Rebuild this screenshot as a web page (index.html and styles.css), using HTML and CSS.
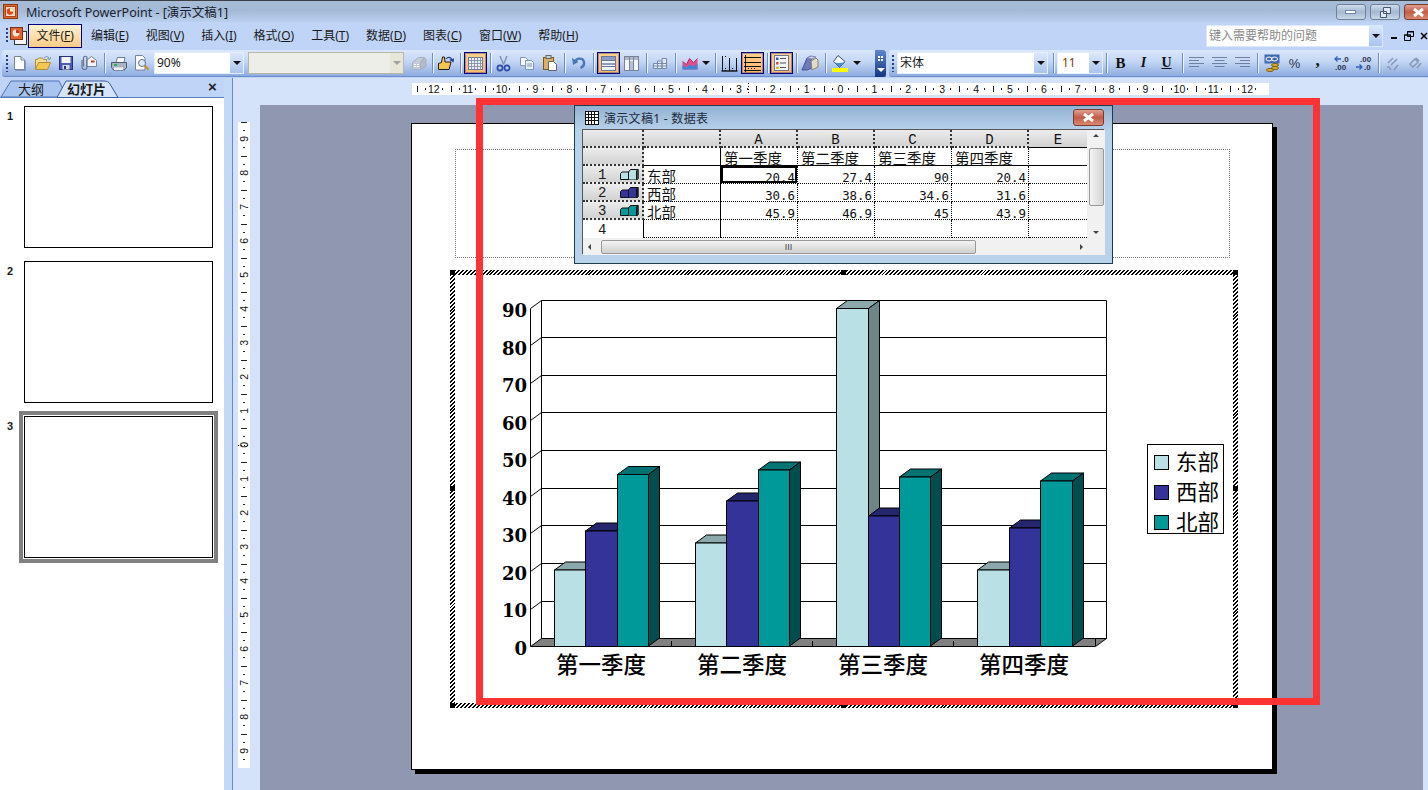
FILE: index.html
```html
<!DOCTYPE html>
<html lang="zh-CN">
<head>
<meta charset="utf-8">
<title>Microsoft PowerPoint - [演示文稿1]</title>
<link rel="stylesheet" href="styles.css">
</head>
<body>
<div class="app">
  <header class="titlebar">
    <svg class="app-icon" width="15" height="15" viewBox="0 0 15 15"><rect x=".5" y=".5" width="14" height="14" fill="#e8672a" stroke="#8c3a12"/><rect x="2.5" y="2.5" width="10" height="10" fill="#f7d9c4" stroke="#a8481c"/><circle cx="7" cy="7.5" r="3.2" fill="#d9481c"/><path d="M7 7.5V4.3a3.2 3.2 0 0 1 3.2 3.2z" fill="#fff3d0"/></svg>
    <span class="app-title">Microsoft PowerPoint - [演示文稿1]</span>
    <div class="winbtns">
      <span class="winbtn"><svg width="12" height="8" viewBox="0 0 12 8"><rect x=".5" y="2.5" width="10" height="3" fill="#fff" stroke="#6f88a8"/></svg></span>
      <span class="winbtn"><svg width="13" height="11" viewBox="0 0 13 11"><path d="M4.5.5h7v6h-7zM1.5 4.5h6v6h-6z" fill="#dfe8f4" stroke="#44586f"/></svg></span>
      <span class="winbtn close"><svg width="13" height="9" viewBox="0 0 13 9"><path d="M2 1l9 7M11 1L2 8" stroke="#fff" stroke-width="3"/></svg></span>
    </div>
  </header>

  <nav class="menubar">
    <span class="grip"></span>
    <svg class="doc-icon" width="18" height="20" viewBox="0 0 18 20"><rect x="4.5" y="5.5" width="12" height="13" fill="#f3f3f3" stroke="#333"/><rect x=".5" y="1.5" width="12" height="12" fill="#e2622e" stroke="#7a3214"/><circle cx="6" cy="7" r="3.4" fill="#ffe6d0"/><path d="M6 7V3.6A3.4 3.4 0 0 1 9.4 7z" fill="#c4391c"/></svg>
    <a class="menu-item active">文件(<u>F</u>)</a>
    <a class="menu-item">编辑(<u>E</u>)</a>
    <a class="menu-item">视图(<u>V</u>)</a>
    <a class="menu-item">插入(<u>I</u>)</a>
    <a class="menu-item">格式(<u>O</u>)</a>
    <a class="menu-item">工具(<u>T</u>)</a>
    <a class="menu-item">数据(<u>D</u>)</a>
    <a class="menu-item">图表(<u>C</u>)</a>
    <a class="menu-item">窗口(<u>W</u>)</a>
    <a class="menu-item">帮助(<u>H</u>)</a>
    <div class="helpbox"><span class="help-text">键入需要帮助的问题</span><span class="help-drop"><i class="caret"></i></span></div>
    <div class="mdi">
      <svg width="8" height="8" viewBox="0 0 8 8"><rect x="1" y="5" width="6" height="2" fill="#000"/></svg>
      <svg width="10" height="10" viewBox="0 0 10 10"><path d="M3.5 .5h6v5h-6zM.5 4h6v5.500h-6z" fill="#bfd4f6" stroke="#000"/><path d="M3 1h7M0 4h7" stroke="#000"/></svg>
      <svg width="8" height="8" viewBox="0 0 8 8"><path d="M1 1l6 6M7 1L1 7" stroke="#000" stroke-width="1.500"/></svg>
    </div>
  </nav>

  <div class="toolbars">
    <div class="toolbar tb-main">
      <span class="grip"></span>
      <span class="btn"><svg width="13" height="16" viewBox="0 0 13 16"><path d="M1.500 1.500h6.500l3.500 3.500v9.500h-10z" fill="#fff" stroke="#7b869b"/><path d="M8 1.500v3.500h3.500" fill="#d5ddec" stroke="#7b869b"/><path d="M12.500 5.500v10h-10" fill="none" stroke="#5f79a8" opacity=".6"/></svg></span>
      <span class="btn"><svg width="18" height="16" viewBox="0 0 18 16"><path d="M1.500 14.500v-10h2l1-1.500h4l1 1.500h3v2" fill="#f7df96" stroke="#b08d3a"/><path d="M1.500 14.500l3-7h12l-3 7z" fill="#f6c650" stroke="#b08d3a"/><path d="M10 3c1.500-2 3.500-2 5 0l-1.500.5 2.500 1 .5-2.500" fill="none" stroke="#7f93b5"/></svg></span>
      <span class="btn"><svg width="14" height="14" viewBox="0 0 14 14"><rect x=".5" y=".5" width="13" height="13" fill="#4b5cb5" stroke="#27316f"/><rect x="2.500" y="1" width="9" height="6" fill="#f4f6fb"/><rect x="3.500" y="9" width="7" height="4.500" fill="#d4d9ec"/><rect x="5" y="10" width="2" height="3" fill="#27316f"/></svg></span>
      <span class="btn"><svg width="17" height="16" viewBox="0 0 17 16"><path d="M6.500 5.500l5-4 5 4v6h-10z" fill="#f2f4f8" stroke="#76839b"/><path d="M11 6.500h3.500" stroke="#c4391c" stroke-width="2"/><path d="M2 5v7a2.500 2.500 0 0 0 5 0V3a1.700 1.700 0 0 0-3.500 0v8.500" fill="none" stroke="#66748f" stroke-width="1.200"/></svg></span>
      <span class="sep w7"></span>
      <span class="btn"><svg width="16" height="15" viewBox="0 0 16 15"><path d="M5 6.500l1.500-5h7.500l-1 5" fill="#f6f7fa" stroke="#6d7a90"/><path d="M.5 6.500h15v5l-2 2.500h-11l-2-2.500z" fill="#aab3c2" stroke="#4f5b6f"/><rect x="3" y="11.500" width="9" height="2.500" fill="#eef0f4"/><rect x="3" y="8" width="3" height="2" fill="#2fb04a"/></svg></span>
      <span class="btn"><svg width="16" height="16" viewBox="0 0 16 16"><path d="M1.500 .5h7l2.500 2.500v12h-9.500z" fill="#fff" stroke="#76839b"/><circle cx="8" cy="8" r="3.500" fill="#dbeafa" stroke="#66748f"/><path d="M10.500 10.500l4 4" stroke="#c98a28" stroke-width="2"/></svg></span>
      <div class="combo zoom-combo"><span class="combo-text">90%</span><span class="drop"><i class="caret"></i></span></div>
      <div class="combo off"><span class="combo-text"></span><span class="drop"><i class="caret"></i></span></div>
      <span class="btn ml3"><svg width="16" height="15" viewBox="0 0 16 15"><path d="M1.500 6.500l6-5h6l-4 5v7h-8z" fill="#c4ccd8" stroke="#a6b0bf"/><path d="M9.500 6.500l4-5 1.500 2v7l-5.500 3z" fill="#b1bac8" stroke="#a6b0bf"/><path d="M3 8.500h2M3 10.500h2M6 8.500h2M6 10.500h2" stroke="#fff"/></svg></span>
      <span class="sep w4"></span>
      <span class="btn"><svg width="17" height="16" viewBox="0 0 17 16"><path d="M1.500 14.500v-6l3-1 1-5.500h2l.5 5h6l-2 7.500z" fill="#f6c650" stroke="#1d1d1d"/><path d="M9 4c2-2.500 4.500-2 6 .5l-1.500.5 2.500 1.500.5-3" fill="none" stroke="#1d3a8f" stroke-width="1.200"/></svg></span>
      <span class="sep w5"></span>
      <span class="btn on ml2"><svg width="15" height="13" viewBox="0 0 15 13"><rect x=".5" y=".5" width="14" height="12" fill="#eef1f7" stroke="#6b7797"/><path d="M.5 3.500h14M.5 6.500h14M.5 9.500h14M3.500 .5v12M6.500 .5v12M9.500 .5v12M12.500 .5v12" stroke="#8995b2"/></svg></span>
      <span class="sep w5"></span>
      <span class="btn"><svg width="15" height="17" viewBox="0 0 15 17"><path d="M4 1l3.500 8.500M11 1L7.500 9.500" stroke="#8795ae" stroke-width="1.500"/><circle cx="4" cy="13" r="2.600" fill="none" stroke="#2e4aa4" stroke-width="1.700"/><circle cx="11" cy="13" r="2.600" fill="none" stroke="#2e4aa4" stroke-width="1.700"/></svg></span>
      <span class="btn"><svg width="16" height="15" viewBox="0 0 16 15"><path d="M1.500 1.500h5l2 2v6h-7z" fill="#fff" stroke="#7d95bb"/><path d="M6.500 4.500h6l2 2v7h-8z" fill="#eaf0fa" stroke="#7d95bb"/><path d="M8 8h5M8 10h5" stroke="#7d95bb"/></svg></span>
      <span class="btn"><svg width="16" height="16" viewBox="0 0 16 16"><rect x="1.500" y="2.500" width="10" height="12" fill="#dcb060" stroke="#7a5a1c"/><rect x="4" y=".5" width="5" height="3" fill="#c9ced8" stroke="#666"/><path d="M6.500 6.500h5l3 3v6h-8z" fill="#fff" stroke="#666"/></svg></span>
      <span class="sep w6"></span>
      <span class="btn"><svg width="14" height="14" viewBox="0 0 14 14"><path d="M3 6c1-4 8-5 9 0 .5 3-1 5-3.500 6" fill="none" stroke="#4a76ba" stroke-width="2.400"/><path d="M0 2l1 7 5.500-3z" fill="#4a76ba"/></svg></span>
      <span class="sep w6"></span>
      <span class="btn on ml1"><svg width="15" height="15" viewBox="0 0 15 15"><rect x=".5" y=".5" width="14" height="14" fill="#f2f5fa" stroke="#6b7797"/><path d="M1 1h13v3H1zM1 7h13v2H1z" fill="#8b9dc2"/><path d="M.5 4.500h14M.5 10.500h14" stroke="#6b7797"/></svg></span>
      <span class="btn"><svg width="15" height="15" viewBox="0 0 15 15"><rect x=".5" y=".5" width="14" height="14" fill="#f2f5fa" stroke="#78839a"/><path d="M1 1h13v3H1z" fill="#aeb7c8"/><path d="M5.500 .5v14M9.500 .5v14" stroke="#78839a"/><rect x="6" y="5" width="3" height="9" fill="#b9c1d0"/></svg></span>
      <span class="sep w5"></span>
      <span class="btn"><svg width="14" height="11" viewBox="0 0 14 11"><path d="M.5 5.500h4v5h-4zM4.500 3h4.500v7.500H4.500zM9 .5h4.500v10H9zM.5 8h13M4.500 5.500h9" fill="#e3ebf7" stroke="#7688a8"/></svg></span>
      <span class="sep w7"></span>
      <span class="btn"><svg width="16" height="14" viewBox="0 0 16 14"><path d="M.5 13.500v-8l4 3 3-6 4 4 4-4v11z" fill="#dd4f8d"/><path d="M.5 13.500v-4l4 2 3-3 4 2 4-3v6z" fill="#3f86d4"/><path d="M.5 5.500l4 3 3-6 4 4 4-4" fill="none" stroke="#b92a6e"/></svg></span>
      <span class="dropbtn"><i class="caret"></i></span>
      <span class="sep w7"></span>
      <span class="btn"><svg width="17" height="17" viewBox="0 0 17 17"><path d="M.5 16h16" stroke="#111" stroke-width="1.400"/><path d="M1.500 1v15M8.500 3v13M15.500 3v13" stroke="#111"/><path d="M4.500 1v2M4.500 13v3M11.500 13v3" stroke="#111" stroke-dasharray="1 1"/></svg></span>
      <span class="btn on"><svg width="17" height="17" viewBox="0 0 17 17"><path d="M1.500 0v17" stroke="#111"/><path d="M0 2.500h17M0 7.500h17M0 11.500h17M0 15.500h17" stroke="#111"/><path d="M4 13.500h9" stroke="#111" stroke-dasharray="1 2"/></svg></span>
      <span class="sep w6"></span>
      <span class="btn on"><svg width="15" height="16" viewBox="0 0 15 16"><rect x=".5" y=".5" width="14" height="15" fill="#f2f4f9" stroke="#6b7797"/><rect x="2" y="2.500" width="2.500" height="2.500" fill="#3c56b8"/><rect x="2" y="7" width="2.500" height="2.500" fill="#d94a4a"/><rect x="2" y="11.500" width="2.500" height="2.500" fill="#e0b428"/><path d="M6 3.500h6M6 8h6M6 12.500h6" stroke="#555"/></svg></span>
      <span class="sep w5"></span>
      <span class="btn"><svg width="18" height="16" viewBox="0 0 18 16"><path d="M1 15L6 3l4-2 1 12-5 2z" fill="#6c78c0" stroke="#4a5090"/><path d="M6 3l4-2 5 1-4 2z" fill="#d0d4ec" stroke="#7f86b8"/><path d="M10 6l5-3 2 2v7l-6 3z" fill="#e0dcc8" stroke="#8a8468"/></svg></span>
      <span class="sep w7 mr1"></span>
      <span class="btn"><svg width="17" height="17" viewBox="0 0 17 17"><path d="M6 .5l7 6-5.500 6-6-6z" fill="#f3f6fb" stroke="#3c4f73"/><path d="M1.500 6.500c3 2 7 2 11.500 0l-5.500 6z" fill="#4a8fd0"/><rect x="0" y="13" width="16" height="4" fill="#ffff00"/></svg></span>
      <span class="dropbtn"><i class="caret"></i></span>
      <span class="chevron"><i></i><b></b></span>
    </div>
    <div class="toolbar tb-format">
      <span class="grip"></span>
      <div class="combo font-combo"><span class="combo-text">宋体</span><span class="drop"><i class="caret"></i></span></div>
      <span class="sep w9"></span>
      <div class="combo size-combo"><span class="combo-text">11</span><span class="drop"><i class="caret"></i></span></div>
      <span class="sep w6"></span>
      <span class="btn txt bold">B</span>
      <span class="btn txt ital">I</span>
      <span class="btn txt und">U</span>
      <span class="sep w7"></span>
      <span class="btn"><svg width="15" height="12" viewBox="0 0 15 12"><path d="M0 .5h15M0 3.500h10M0 6.500h15M0 9.500h10" stroke="#6d80a3"/></svg></span>
      <span class="btn"><svg width="15" height="12" viewBox="0 0 15 12"><path d="M0 .5h15M2.500 3.500h10M0 6.500h15M2.500 9.500h10" stroke="#6d80a3"/></svg></span>
      <span class="btn"><svg width="15" height="12" viewBox="0 0 15 12"><path d="M0 .5h15M5 3.500h10M0 6.500h15M5 9.500h10" stroke="#6d80a3"/></svg></span>
      <span class="sep w6"></span>
      <span class="btn"><svg width="16" height="18" viewBox="0 0 16 18"><rect x=".5" y=".5" width="15" height="9" fill="#3f6ab0"/><ellipse cx="5" cy="5" rx="3" ry="2" fill="none" stroke="#fff"/><ellipse cx="10.500" cy="5" rx="3" ry="2" fill="none" stroke="#fff"/><ellipse cx="11" cy="11" rx="3.500" ry="1.500" fill="#e0b428" stroke="#7a5a1c"/><ellipse cx="11" cy="14" rx="3.500" ry="1.500" fill="#e0b428" stroke="#7a5a1c"/><ellipse cx="6" cy="16" rx="3.500" ry="1.500" fill="#e0b428" stroke="#7a5a1c"/></svg></span>
      <span class="btn txt pct">%</span>
      <span class="btn txt comma">,</span>
      <span class="btn"><svg width="16" height="17" viewBox="0 0 16 17"><path d="M8 4H2M4.500 1.500L2 4l2.500 2.500" fill="none" stroke="#2f5fb8" stroke-width="1.300"/><text x="9" y="7" class="dec">.0</text><text x="2" y="15" class="dec">.00</text></svg></span>
      <span class="btn"><svg width="16" height="17" viewBox="0 0 16 17"><text x="4" y="7" class="dec">.00</text><text x="8" y="15" class="dec">.0</text><path d="M0 12h6M3.500 9.500L6 12l-2.500 2.500" fill="none" stroke="#2f5fb8" stroke-width="1.300"/></svg></span>
      <span class="sep w6"></span>
      <span class="btn"><svg width="15" height="15" viewBox="0 0 15 15"><path d="M3 7l5-5M6 9l6-6M2 11h2l2 3M9 14l4-5" fill="none" stroke="#8b9abb" stroke-width="1.600"/></svg></span>
      <span class="btn"><svg width="15" height="15" viewBox="0 0 15 15"><path d="M2 8l5-5 3 3-5 5zM8 2l3 3M9 12l4-5" fill="none" stroke="#8b9abb" stroke-width="1.600"/></svg></span>
    </div>
  </div>

  <main class="main">
    <aside class="pane">
      <div class="tabs">
        <svg class="tabs-bg" width="224" height="20" viewBox="0 0 224 20"><path d="M1 19L11 3h48l8 16z" fill="#a9c5ef" stroke="#4e72b5"/><path d="M57 19.500L66 3h38c3 0 5 1 6 3l8 13.500z" fill="#d5e4fb" stroke="#3b5d9c"/><path d="M0 19.500h57M118 19.500h106" stroke="#5a7dbd"/></svg>
        <span class="tab">大纲</span>
        <span class="tab current">幻灯片</span>
        <span class="tab-close">×</span>
      </div>
      <ol class="thumbs">
        <li class="thumb"><span class="thumb-no">1</span><div class="thumb-box"></div></li>
        <li class="thumb"><span class="thumb-no">2</span><div class="thumb-box"></div></li>
        <li class="thumb selected"><span class="thumb-no">3</span><div class="thumb-box"></div></li>
      </ol>
    </aside>
    <div class="splitter"></div>
    <section class="workspace">
      <div class="hruler">
        <span>12</span><span>11</span><span>10</span><span>9</span><span>8</span><span>7</span><span>6</span><span>5</span><span>4</span><span>3</span><span>2</span><span>1</span><span>0</span><span>1</span><span>2</span><span>3</span><span>4</span><span>5</span><span>6</span><span>7</span><span>8</span><span>9</span><span>10</span><span>11</span><span>12</span>
        <i class="hmark"></i>
      </div>
      <div class="vruler">
        <span><b>9</b></span><span><b>8</b></span><span><b>7</b></span><span><b>6</b></span><span><b>5</b></span><span><b>4</b></span><span><b>3</b></span><span><b>2</b></span><span><b>1</b></span><span><b>0</b></span><span><b>1</b></span><span><b>2</b></span><span><b>3</b></span><span><b>4</b></span><span><b>5</b></span><span><b>6</b></span><span><b>7</b></span><span><b>8</b></span><span><b>9</b></span>
        <i class="vmark"></i>
      </div>
      <div class="canvas">
        <div class="slide">
          <div class="placeholder"></div>

          <div class="chart-frame">
            <i class="handle tl"></i><i class="handle tc"></i><i class="handle tr"></i><i class="handle ml"></i><i class="handle mr"></i><i class="handle bl"></i><i class="handle bc"></i><i class="handle br"></i>
            <div class="chart-inner">
              <svg class="chart" width="778" height="428" viewBox="455 275 778 428">
                <path class="floor" d="M530.500 646.500L541.500 638.500H1106.500L1095.500 646.500Z"/>
                <path class="ln" d="M541.500 638.500V300.500H1106.500V638.500L1095.500 646.500H530.500V308.500L541.500 300.500"/>
                <path class="ln" d="M541.500 337.500H1106.500M541.500 375.500H1106.500M541.500 412.500H1106.500M541.500 450.500H1106.500M541.500 488.500H1106.500M541.500 525.500H1106.500M541.500 563.500H1106.500M541.500 601.500H1106.500M541.500 638.500H1106.500"/>
                <path class="ln" d="M530.500 345.500L541.500 337.500M530.500 383.500L541.500 375.500M530.500 420.500L541.500 412.500M530.500 458.500L541.500 450.500M530.500 496.500L541.500 488.500M530.500 533.500L541.500 525.500M530.500 571.500L541.500 563.500M530.500 609.500L541.500 601.500M530.500 646.500L541.500 638.500"/>
                <path class="ln" d="M671.500 646V641M812.500 646V641M953.500 646V641M1095.500 646V639"/>

                <g class="bar s1"><path class="top" d="M554.500 570L565.500 562H596.500L585.500 570Z"/><path class="side" d="M585.500 570L596.500 562V638L585.500 646Z"/><rect class="front" x="554.500" y="570" width="31" height="76.500"/></g>
                <g class="bar s2"><path class="top" d="M585.500 531L596.500 523H628.500L617.500 531Z"/><path class="side" d="M617.500 531L628.500 523V638L617.500 646Z"/><rect class="front" x="585.500" y="531" width="32" height="115.500"/></g>
                <g class="bar s3"><path class="top" d="M617.500 474.500L628.500 466.500H659.500L648.500 474.500Z"/><path class="side" d="M648.500 474.500L659.500 466.500V638L648.500 646Z"/><rect class="front" x="617.500" y="474.500" width="31" height="172"/></g>

                <g class="bar s1"><path class="top" d="M695.500 543L706.500 535H737.500L726.500 543Z"/><path class="side" d="M726.500 543L737.500 535V638L726.500 646Z"/><rect class="front" x="695.500" y="543" width="31" height="103.500"/></g>
                <g class="bar s2"><path class="top" d="M726.500 501L737.500 493H769.500L758.500 501Z"/><path class="side" d="M758.500 501L769.500 493V638L758.500 646Z"/><rect class="front" x="726.500" y="501" width="32" height="145.500"/></g>
                <g class="bar s3"><path class="top" d="M758.500 470L769.500 462H800.500L789.500 470Z"/><path class="side" d="M789.500 470L800.500 462V638L789.500 646Z"/><rect class="front" x="758.500" y="470" width="31" height="176.500"/></g>

                <g class="bar s1"><path class="top" d="M836.500 308.500L847.500 300.500H879.500L868.500 308.500Z"/><path class="side" d="M868.500 308.500L879.500 300.500V638L868.500 646Z"/><rect class="front" x="836.500" y="308.500" width="32" height="338"/></g>
                <g class="bar s2"><path class="top" d="M868.500 516L879.500 508H910.500L899.500 516Z"/><path class="side" d="M899.500 516L910.500 508V638L899.500 646Z"/><rect class="front" x="868.500" y="516" width="31" height="130.500"/></g>
                <g class="bar s3"><path class="top" d="M899.500 477L910.500 469H941.500L930.500 477Z"/><path class="side" d="M930.500 477L941.500 469V638L930.500 646Z"/><rect class="front" x="899.500" y="477" width="31" height="169.500"/></g>

                <g class="bar s1"><path class="top" d="M977.500 570L988.500 562H1020.500L1009.500 570Z"/><path class="side" d="M1009.500 570L1020.500 562V638L1009.500 646Z"/><rect class="front" x="977.500" y="570" width="32" height="76.500"/></g>
                <g class="bar s2"><path class="top" d="M1009.500 528L1020.500 520H1051.500L1040.500 528Z"/><path class="side" d="M1040.500 528L1051.500 520V638L1040.500 646Z"/><rect class="front" x="1009.500" y="528" width="31" height="118.500"/></g>
                <g class="bar s3"><path class="top" d="M1040.500 481L1051.500 473H1083.500L1072.500 481Z"/><path class="side" d="M1072.500 481L1083.500 473V638L1072.500 646Z"/><rect class="front" x="1040.500" y="481" width="32" height="165.500"/></g>

                <g class="ylab">
                  <text x="527" y="317">90</text><text x="527" y="354.500">80</text><text x="527" y="392">70</text><text x="527" y="429.500">60</text><text x="527" y="467">50</text><text x="527" y="504.500">40</text><text x="527" y="542">30</text><text x="527" y="579.500">20</text><text x="527" y="617">10</text><text x="527" y="654.500">0</text>
                </g>
                <g class="xlab">
                  <text x="601" y="673">第一季度</text><text x="742" y="673">第二季度</text><text x="883" y="673">第三季度</text><text x="1024" y="673">第四季度</text>
                </g>
                <rect class="legend" x="1147.500" y="444.500" width="76" height="89"/>
                <rect class="swatch s1f" x="1154.500" y="455.500" width="14" height="14"/>
                <rect class="swatch s2f" x="1154.500" y="485.500" width="14" height="14"/>
                <rect class="swatch s3f" x="1154.500" y="515.500" width="14" height="14"/>
                <g class="leglab"><text x="1176" y="470">东部</text><text x="1176" y="500">西部</text><text x="1176" y="530">北部</text></g>
              </svg>
            </div>
          </div>

          <div class="sheet-win">
            <div class="sheet-title">
              <svg width="14" height="14" viewBox="0 0 14 14"><rect x=".5" y=".5" width="13" height="13" fill="#fff" stroke="#111"/><path d="M.5 3.500h13M.5 6.500h13M.5 9.500h13M3.500 .5v13M6.500 .5v13M9.500 .5v13" stroke="#111"/></svg>
              <span>演示文稿1 - 数据表</span>
              <span class="sheet-close"><svg width="13" height="9" viewBox="0 0 13 9"><path d="M2 1l9 7M11 1L2 8" stroke="#fff" stroke-width="3"/></svg></span>
            </div>
            <div class="sheet-body">
              <div class="sheet-main">
                <div class="sheet-grid">
                  <div class="hd"></div><div class="hd"></div><div class="hd col">A</div><div class="hd col">B</div><div class="hd col">C</div><div class="hd col">D</div><div class="hd col last">E</div>

                  <div class="hd"></div><div class="c name sb"></div><div class="c txt sb">第一季度</div><div class="c txt sb">第二季度</div><div class="c txt sb">第三季度</div><div class="c txt sb">第四季度</div><div class="c sb end"></div>

                  <div class="hd row"><span>1</span><svg width="19" height="11" viewBox="0 0 19 11"><path class="mini f1" d="M.5 4.500l1.500-1.500h6l1 0v7.500h-8.500z"/><path class="mini f1" d="M8.500 3l2-2.500h7.500v9l-1.500 1.500h-8z"/><path class="mini d1" d="M16.500 2l1.500-1.500v9l-1.500 1.500z"/></svg></div><div class="c name">东部</div><div class="c num sel">20.4</div><div class="c num">27.4</div><div class="c num">90</div><div class="c num">20.4</div><div class="c end"></div>

                  <div class="hd row"><span>2</span><svg width="19" height="11" viewBox="0 0 19 11"><path class="mini f2" d="M.5 4.500l1.500-1.500h6l1 0v7.500h-8.500z"/><path class="mini f2" d="M8.500 3l2-2.500h7.500v9l-1.500 1.500h-8z"/><path class="mini d2" d="M16.500 2l1.500-1.500v9l-1.500 1.500z"/></svg></div><div class="c name">西部</div><div class="c num">30.6</div><div class="c num">38.6</div><div class="c num">34.6</div><div class="c num">31.6</div><div class="c end"></div>

                  <div class="hd row"><span>3</span><svg width="19" height="11" viewBox="0 0 19 11"><path class="mini f3" d="M.5 4.500l1.500-1.500h6l1 0v7.500h-8.500z"/><path class="mini f3" d="M8.500 3l2-2.500h7.500v9l-1.500 1.500h-8z"/><path class="mini d3" d="M16.500 2l1.500-1.500v9l-1.500 1.500z"/></svg></div><div class="c name">北部</div><div class="c num">45.9</div><div class="c num">46.9</div><div class="c num">45</div><div class="c num">43.9</div><div class="c end"></div>

                  <div class="plain row"><span>4</span></div><div class="c name"></div><div class="c"></div><div class="c"></div><div class="c"></div><div class="c"></div><div class="c end"></div>
                </div>
                <div class="vscroll"><i class="arrow up"></i><span class="vthumb"></span><i class="arrow down"></i></div>
              </div>
              <div class="hscroll"><i class="arrow left"></i><span class="hthumb">III</span><i class="arrow right"></i></div>
            </div>
          </div>
        </div>
      </div>
      <div class="focus-box"></div>
    </section>
  </main>
</div>
</body>
</html>
```

FILE: styles.css
```css
* { box-sizing: border-box; }
html, body { margin: 0; height: 790px; overflow: hidden; }
body { font-family: "Noto Sans", "Noto Sans CJK SC", sans-serif; font-size: 12px; color: #1a1a1a; background: #fff; }
.app { display: flex; flex-direction: column; height: 790px; width: 1428px; }

.titlebar { height: 22px; display: flex; align-items: center; padding-left: 3px; border-top: 1px solid #3c3f44; background: linear-gradient(#a7bcd6, #a3b9d6 45%, #bbd0ee); }
.app-icon { margin-right: 8px; }
.app-title { font-size: 12.500px; color: #18222e; }
.winbtns { margin-left: auto; display: flex; gap: 4px; margin-right: -5px; margin-top: 1px; }
.winbtn { width: 30px; height: 16px; display: flex; align-items: center; justify-content: center; border: 1px solid #6f8199; border-radius: 3px; background: linear-gradient(#cfdcec, #a4b8d0 50%, #c9d8ea); }
.winbtn.close { width: 29px; border-color: #7a3a30; background: linear-gradient(#e0a090, #c25c48 50%, #d98a70); }

.menubar { height: 28px; display: flex; align-items: center; padding-left: 6px; background: #bfd4f6; font-size: 12px; }
.grip { flex: none; width: 2px; height: 16px; background: repeating-linear-gradient(#27417a 0 2px, transparent 2px 4px); }
.doc-icon { margin-left: 2px; flex: none; }
.menu-item { height: 24px; padding: 0 8.500px; line-height: 23px; white-space: nowrap; color: #1a1a1a; }
.menu-item u { text-underline-offset: 1px; }
.menu-item.active { background: linear-gradient(#fff5d6, #ffc982); box-shadow: inset 0 0 0 1px #000080; }
.helpbox { margin-left: auto; width: 177px; height: 22px; display: flex; background: #fff; border: 1px solid #dce8fb; }
.help-text { flex: 1; color: #8a8a8a; line-height: 19px; padding-left: 2px; }
.help-drop { width: 13px; display: flex; align-items: center; justify-content: center; background: linear-gradient(#dbe8fb, #a9c4ee); }
.mdi { width: 45px; display: flex; align-items: center; justify-content: space-between; padding: 0 0 0 7px; }

.toolbars { height: 28px; display: flex; background: #bfd4f6; }
.toolbar { height: 27px; display: flex; align-items: center; background: linear-gradient(#dbe7fb, #c3d6f5 45%, #8dacdf); border-bottom: 1px solid #6c8dca; }
.tb-main { width: 884px; margin-left: 2px; padding-left: 4px; border-radius: 3px 0 0 3px; position: relative; }
.tb-format { flex: 1; margin-left: 3px; padding-left: 3px; border-radius: 3px 0 0 3px; }
.toolbar .grip { height: 17px; }
.tb-format .grip { margin-right: 3px; }
.btn { flex: none; width: 23px; height: 22px; display: flex; align-items: center; justify-content: center; }
.btn.on { background: linear-gradient(#ffd28e, #ffb868); box-shadow: inset 0 0 0 1px #000080, inset 0 0 0 2px rgba(0, 0, 128, .3); }
.btn.txt { font-family: "Liberation Serif", serif; font-size: 14px; color: #111; }
.btn.bold { font-weight: 700; font-size: 15px; }
.btn.ital { font-style: italic; font-weight: 700; }
.btn.und { text-decoration: underline; font-weight: 700; }
.btn.pct { font-family: "Liberation Sans", sans-serif; font-size: 13px; color: #2a3350; }
.btn.comma { font-weight: 700; font-size: 17px; padding-bottom: 5px; }
.dec { font: 700 8px "Liberation Sans", sans-serif; fill: #2b3350; }
.ml1 { margin-left: 1px; }
.ml2 { margin-left: 2px; }
.ml3 { margin-left: 3px; }
.mr1 { margin-right: 1px; }
.dropbtn { flex: none; width: 10px; display: flex; justify-content: center; }
.caret { display: block; width: 0; height: 0; border: 4px solid transparent; border-top-color: #111; border-bottom: 0; }
.sep { flex: none; height: 20px; position: relative; }
.sep::after { content: ""; position: absolute; left: 50%; top: 0; bottom: 0; width: 1px; background: #6c8dca; box-shadow: 1px 0 0 #eef4fe; }
.w4 { width: 4px; } .w5 { width: 5px; } .w6 { width: 6px; } .w7 { width: 7px; } .w9 { width: 9px; }
.combo { flex: none; height: 22px; display: flex; background: #fff; border: 1px solid #e3edfc; }
.combo-text { flex: 1; padding-left: 2px; line-height: 19px; font-size: 12px; }
.drop { width: 13px; display: flex; align-items: center; justify-content: center; background: linear-gradient(#dbe8fb, #a9c4ee); }
.zoom-combo { width: 90px; margin-left: 1px; }
.combo.off { width: 156px; margin-left: 4px; background: #eeeee8; border-color: #b8b8a8; }
.combo.off .drop { background: #e8e6d8; }
.combo.off .caret { border-top-color: #a0a0a0; }
.font-combo { width: 151px; }
.size-combo { width: 46px; }
.size-combo .combo-text { color: #7a3e00; padding-left: 4px; }
.chevron { position: absolute; left: 873px; top: 0; width: 11px; height: 27px; background: linear-gradient(#5f86cc, #14377f); border-radius: 0 3px 3px 0; }
.chevron i { position: absolute; left: 3px; top: 6px; width: 5px; height: 3px; border-left: 2px dotted #fff; border-right: 2px dotted #fff; }
.chevron b { position: absolute; left: 2px; top: 18px; width: 0; height: 0; border: 4px solid transparent; border-top-color: #fff; border-bottom: 0; }

.main { flex: 1; display: flex; min-height: 0; }
.pane { width: 224px; flex: none; background: #fff; }
.tabs { height: 20px; position: relative; display: flex; align-items: center; background: #bfd4f6; }
.tabs-bg { position: absolute; left: 0; top: 0; }
.tab { position: relative; width: 60px; padding-left: 18px; font-size: 13px; line-height: 20px; padding-top: 2px; white-space: nowrap; }
.tab.current { font-weight: 700; padding-left: 7px; }
.tab-close { position: absolute; left: 208px; top: 0; font: 700 15px/18px "Liberation Sans", sans-serif; color: #222; }
.thumbs { list-style: none; margin: 0; padding: 8px 0 0; display: flex; flex-direction: column; gap: 13px; }
.thumb { display: flex; position: relative; padding-left: 24px; }
.thumb-no { position: absolute; left: 7px; top: 3px; font: 700 11px/14px "Liberation Sans", sans-serif; }
.thumb-box { width: 189px; height: 142px; background: #fff; border: 1px solid #000; }
.thumb.selected .thumb-box { outline: 4px solid #808080; outline-offset: 1px; }

.splitter { width: 9px; flex: none; background: #c4d9f8; border-right: 1px solid #6a8ad0; }

.workspace { flex: 1; min-width: 0; position: relative; display: grid; grid-template-columns: 27px 1fr 5px; grid-template-rows: 27px 1fr; background: #d5e3fa; }
.hruler { grid-column: 2; grid-row: 1; margin: 5px 0 10px 152px; width: 857px; height: 12px; background-color: #fff; display: flex; justify-content: center; position: relative; }
.hruler span { flex: 0 0 33.900px; height: 12px; text-align: center; font: 10.500px/12px "Liberation Sans", sans-serif; color: #111; background-image: linear-gradient(#222, #222), linear-gradient(#222, #222), linear-gradient(#222, #222); background-size: 1px 6px, 1px 2px, 1px 2px; background-repeat: no-repeat; background-position: 0 3px, 25% 5px, 75% 5px; }
.hmark { position: absolute; left: 336px; top: 0; width: 1px; height: 12px; background: repeating-linear-gradient(#000 0 1px, transparent 1px 3px); }
.vruler { grid-column: 1; grid-row: 2; margin: 17px 10px 0 5px; width: 12px; height: 646px; background: #fff; display: flex; flex-direction: column; position: relative; }
.vruler span { flex: 0 0 34px; width: 12px; display: flex; align-items: center; justify-content: center; background-image: linear-gradient(#222, #222), linear-gradient(#222, #222), linear-gradient(#222, #222); background-size: 6px 1px, 2px 1px, 2px 1px; background-repeat: no-repeat; background-position: 3px 0, 5px 25%, 5px 75%; }
.vruler b { font: 400 10.500px/12px "Liberation Sans", sans-serif; color: #111; writing-mode: vertical-rl; transform: rotate(180deg); }
.vmark { position: absolute; left: 0; top: 323px; width: 12px; height: 1px; background: repeating-linear-gradient(90deg, #000 0 1px, transparent 1px 3px); }
.canvas { grid-column: 2; grid-row: 2; background: #8f98b0; padding: 18px 0 0 151px; min-height: 0; overflow: hidden; }

.slide { position: relative; width: 862px; height: 647px; background: #fff; border: 1px solid #000; box-shadow: 4px 4px 0 #000; }
.placeholder { position: absolute; left: 43px; top: 25px; width: 775px; height: 109px; border: 1px dotted #777; }
.chart-frame { position: absolute; left: 38px; top: 146px; width: 788px; height: 438px; padding: 5px; background: repeating-linear-gradient(-45deg, #000 0 1.400px, #fff 1.400px 2.800px); }
.chart-inner { width: 778px; height: 428px; background: #fff; }
.chart { display: block; }
.handle { position: absolute; width: 5px; height: 5px; background: #000; }
.handle.tl { left: 0; top: 0; } .handle.tc { left: 391px; top: 0; } .handle.tr { right: 0; top: 0; }
.handle.ml { left: 0; top: 216px; } .handle.mr { right: 0; top: 216px; }
.handle.bl { left: 0; bottom: 0; } .handle.bc { left: 391px; bottom: 0; } .handle.br { right: 0; bottom: 0; }

.ln { fill: none; stroke: #000; stroke-width: 1; }
.floor { fill: #808080; }
.bar path, .bar rect { stroke: #000; stroke-width: 1; }
.s1 .front, .s1f { fill: #b9e0e4; }
.s1 .top { fill: #8ba8ab; }
.s1 .side { fill: #6f8689; }
.s2 .front, .s2f { fill: #333399; }
.s2 .top { fill: #26266f; }
.s2 .side { fill: #1a1a4d; }
.s3 .front, .s3f { fill: #009999; }
.s3 .top { fill: #007373; }
.s3 .side { fill: #004d4d; }
.ylab text { font: 700 18px "DejaVu Serif", serif; text-anchor: end; fill: #000; }
.xlab text { font: 500 22.500px "Noto Sans CJK SC", sans-serif; text-anchor: middle; fill: #000; }
.leglab text { font: 400 21.500px "Noto Sans CJK SC", sans-serif; fill: #000; }
.legend { fill: #fff; stroke: #000; }
.swatch { stroke: #000; }

.sheet-win { position: absolute; left: 162px; top: -19px; width: 539px; height: 159px; background: linear-gradient(#92b2d2, #b9d2ec 25px); border: 1px solid #1d3c4c; padding: 0 7px 0 8px; display: flex; flex-direction: column; }
.sheet-title { height: 24px; flex: none; display: flex; align-items: center; gap: 5px; padding-left: 2px; font-size: 12px; letter-spacing: .3px; color: #1c2a3a; position: relative; }
.sheet-close { position: absolute; right: 1px; top: 3px; width: 31px; height: 17px; display: flex; align-items: center; justify-content: center; border: 1px solid #7a3a30; border-radius: 3px; background: linear-gradient(#e0a090, #c25c48 50%, #d98a70); }
.sheet-body { width: 522px; height: 125px; background: #fff; box-shadow: -1px -1px 0 #555; display: flex; flex-direction: column; }
.sheet-main { display: flex; height: 108px; }
.sheet-grid { width: 504px; display: grid; grid-template-columns: 61px 77px 77px 77px 77px 77px 58px; grid-auto-rows: 18px; background: #fff; }
.hd { background: linear-gradient(#ececec, #d2d2d2); border-right: 2px dotted #333; border-bottom: 2px dotted #333; height: 18px; }
.hd.col { font: 14px/21px "Liberation Mono", monospace; text-align: center; color: #111; }
.hd.last { border-right: 0; border-bottom: 1px solid #000; }
.row { display: flex; align-items: center; justify-content: space-between; padding: 3px 0 0 15px; font: 14px/15px "Liberation Mono", monospace; }
.row svg { margin: -2px 3px 0 0; }
.plain { border-right: 1px solid #000; height: 18px; }
.mini { stroke: #111; stroke-width: 1; }
.f1 { fill: #b9e0e4; } .d1 { fill: #6f8689; }
.f2 { fill: #333399; } .d2 { fill: #1a1a4d; }
.f3 { fill: #009999; } .d3 { fill: #004d4d; }
.c { height: 18px; border-right: 1px dotted #000; border-bottom: 1px dotted #000; font-size: 14.500px; line-height: 21px; white-space: nowrap; color: #111; }
.c.sb { border-bottom: 1px solid #000; }
.c.name { border-right: 1px solid #000; padding-left: 3px; }
.c.txt { padding-left: 3px; }
.c.num { text-align: right; font: 12.400px/23px "DejaVu Sans Mono", monospace; padding-right: 2px; }
.c.end { border-right: 0; }
.c.sel { box-shadow: inset 0 0 0 2px #000; }
.vscroll { width: 18px; background: #f1f1f1; display: flex; flex-direction: column; align-items: center; justify-content: space-between; position: relative; padding: 4px 0; }
.vthumb { position: absolute; left: 2px; top: 18px; width: 15px; height: 58px; background: linear-gradient(90deg, #f4f4f4, #d4d4d4); border: 1px solid #9a9a9a; border-radius: 2px; }
.hscroll { height: 17px; background: #f1f1f1; position: relative; display: flex; align-items: center; justify-content: space-between; padding: 0 22px 0 5px; }
.hthumb { position: absolute; left: 18px; top: 2px; width: 375px; height: 14px; background: linear-gradient(#f4f4f4, #cfcfcf); border: 1px solid #9a9a9a; border-radius: 2px; text-align: center; font: 9px/12px "Liberation Sans", sans-serif; color: #444; }
.arrow { display: block; width: 0; height: 0; border: 3px solid transparent; }
.arrow.up { border-top: 0; border-bottom-color: #444; }
.arrow.down { border-bottom: 0; border-top-color: #444; }
.arrow.left { border-left: 0; border-right-color: #444; }
.arrow.right { border-right: 0; border-left-color: #444; }

.focus-box { position: absolute; left: 243px; top: 20px; width: 844px; height: 607px; border: 7px solid #ff3333; pointer-events: none; }
```
